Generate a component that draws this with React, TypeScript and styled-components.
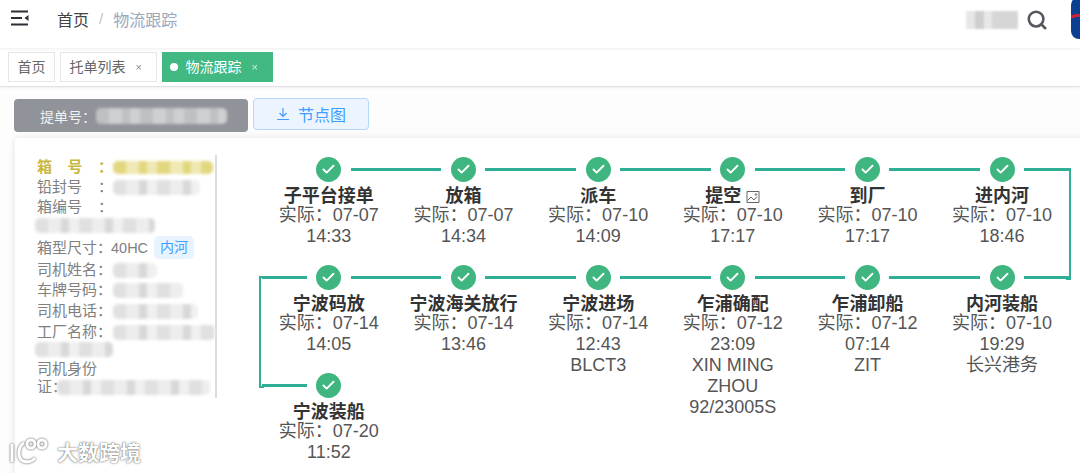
import React from "react";
import styled, { createGlobalStyle } from "styled-components";
import { Check, Search } from "lucide-react";

const GlobalStyle = createGlobalStyle`
  html, body {
    margin: 0;
    height: 473px;
    overflow: hidden;
    background: #fff;
    font-family: "Liberation Sans", "Noto Sans CJK SC", sans-serif;
  }
`;

const Page = styled.div`
  position: relative;
  width: 1080px;
  height: 473px;
  overflow: hidden;
  background: #fdfdfe;
`;

const Header = styled.header`
  height: 48px;
  display: flex;
  align-items: center;
  background: #fff;
  padding-left: 10px;
  box-shadow: 0 1px 3px rgba(0, 21, 41, 0.07);
  position: relative;
`;

const Crumbs = styled.div`
  display: flex;
  align-items: center;
  margin-left: 27px;
  margin-top: -11px;
  font-size: 16px;
  color: #444;
`;

const Sep = styled.span`
  margin: 0 10px;
  color: #c0c4cc;
  font-size: 15px;
`;

const CrumbCurrent = styled.span`
  color: #97a8be;
`;

const HeaderRight = styled.div`
  margin-left: auto;
  display: flex;
  align-items: center;
  margin-top: -8px;
  color: #54585f;
`;

const SearchBlur = styled.div`
  width: 52px;
  height: 18px;
  margin-right: 8px;
  filter: blur(1px);
  background: linear-gradient(90deg, #e6e6e6 0 18%, #cfcfcf 18% 34%, #e8e8e8 34% 50%, #d6d6d6 50% 100%);
`;

const Logo = styled.div`
  width: 20px;
  height: 42px;
  margin: -4px -11px 0 23px;
  border-radius: 8px 0 0 8px;
  background: linear-gradient(172deg, #0b3f92 0 40%, #c8213a 40% 47%, #0b3f92 47% 100%);
`;

const TagBar = styled.nav`
  height: 39px;
  padding: 4px 8px 0;
  box-sizing: border-box;
  display: flex;
  gap: 5px;
  background: #fff;
  border-bottom: 1px solid #dfe1e6;
  box-shadow: 0 1px 2px rgba(0, 0, 0, 0.06);
`;

const Tag = styled.div<{ $active?: boolean }>`
  height: 30px;
  box-sizing: border-box;
  display: flex;
  align-items: center;
  padding: ${(p) => (p.$active ? "0 8px 0 7px" : "0 8.5px")};
  border: 1px solid ${(p) => (p.$active ? "#42b983" : "#e4e6ea")};
  background: ${(p) => (p.$active ? "#42b983" : "#fff")};
  color: ${(p) => (p.$active ? "#fff" : "#666")};
  font-size: 14px;
  line-height: 26px;
`;

const TagDot = styled.i`
  width: 8px;
  height: 8px;
  border-radius: 50%;
  background: #fff;
  margin-right: 7px;
`;

const TagClose = styled.span`
  margin-left: 10px;
  margin-right: 6px;
  font-size: 11px;
  opacity: 0.75;
`;

const Toolbar = styled.div`
  display: flex;
  align-items: flex-start;
  gap: 5px;
  padding: 11px 0 0 14px;
  height: 51px;
  box-sizing: border-box;
`;

const BillBar = styled.div`
  width: 234px;
  height: 33px;
  margin-top: 1px;
  box-sizing: border-box;
  padding-left: 26px;
  display: flex;
  align-items: center;
  border-radius: 4px;
  background: #909399;
  color: #f1f1f2;
  font-size: 14px;
`;

const NodeButton = styled.button`
  width: 116px;
  height: 32px;
  display: flex;
  align-items: center;
  justify-content: center;
  gap: 8px;
  padding: 0;
  border: 1px solid #b3d8ff;
  border-radius: 4px;
  background: #ecf5ff;
  color: #409eff;
  font: 16px "Liberation Sans", "Noto Sans CJK SC", sans-serif;
`;

const Card = styled.main`
  margin-left: 15px;
  width: 1075px;
  height: 340px;
  display: flex;
  background: #fff;
  border-radius: 4px 0 0 0;
  box-shadow: 0 0 8px rgba(0, 0, 0, 0.1);
`;

const InfoPanel = styled.aside`
  width: 180px;
  height: 243px;
  margin: 17px 0 0 22px;
  padding-top: 2px;
  flex: none;
  box-sizing: border-box;
  border-right: 2px solid #dcdcdc;
  color: #808080;
  font-size: 15px;
  line-height: 20px;
`;

const InfoRow = styled.div<{ $gold?: boolean; $gap?: number }>`
  display: flex;
  align-items: center;
  min-height: 20px;
  margin-top: ${(p) => p.$gap ?? 0}px;
  color: ${(p) => (p.$gold ? "#c9b63f" : "inherit")};
  font-weight: ${(p) => (p.$gold ? 700 : 400)};
  white-space: nowrap;
`;

const InfoLabel = styled.span<{ $w?: number }>`
  width: ${(p) => p.$w ?? 76}px;
  flex: none;
  display: flex;
  justify-content: space-between;
`;

const InfoValue = styled.span`
  font-size: 14.5px;
`;

const Blur = styled.div<{ $w: number; $h?: number; $tone?: string; $light?: string; $indent?: number }>`
  width: ${(p) => p.$w}px;
  height: ${(p) => p.$h ?? 15}px;
  margin-left: ${(p) => p.$indent ?? 0}px;
  flex: none;
  border-radius: 5px;
  filter: blur(1.5px);
  background: repeating-linear-gradient(
    90deg,
    ${(p) => p.$tone ?? "#e0e0e0"} 0 13px,
    ${(p) => p.$light ?? "#ededed"} 13px 26px,
    ${(p) => p.$tone ?? "#d8d8d8"} 26px 34px,
    ${(p) => p.$light ?? "#f0f0f0"} 34px 44px
  );
`;

const RiverTag = styled.span`
  margin-left: 6px;
  padding: 0 6px;
  height: 23px;
  line-height: 23px;
  border-radius: 5px;
  background: #e8f3ff;
  color: #409eff;
  font-size: 14px;
`;

const Chart = styled.section`
  margin: 19px 0 0 44.5px;
  display: grid;
  grid-template-columns: repeat(6, 134.67px);
  grid-auto-rows: 108px;
`;

const Node = styled.div`
  position: relative;
  text-align: center;
  font-size: 18px;
  line-height: 21px;
  color: #555;
`;

const NodeHead = styled.div`
  display: flex;
  align-items: center;
  height: 25px;
  margin-bottom: 3px;
`;

const Link = styled.i<{ $off?: boolean }>`
  flex: 1;
  height: 2.5px;
  background: ${(p) => (p.$off ? "transparent" : "#2fb096")};
`;

const Dot = styled.span`
  width: 25px;
  height: 25px;
  margin: 0 9.5px;
  flex: none;
  display: flex;
  align-items: center;
  justify-content: center;
  border-radius: 50%;
  background: #3fb67f;
  color: #fff;
`;

const Turn = styled.i<{ $side: "left" | "right" }>`
  position: absolute;
  top: 11px;
  ${(p) => (p.$side === "left" ? "left: -3px;" : "right: -2px;")}
  width: 3px;
  height: 108px;
  box-sizing: content-box;
  border: 2.5px solid #2fb096;
  border-${(p) => (p.$side === "left" ? "right" : "left")}: none;
`;

const NodeTitle = styled.div`
  font-weight: 700;
  color: #333;
  display: flex;
  justify-content: center;
  align-items: center;
  gap: 5px;
  margin-bottom: -1px;
  position: relative;
  top: 1px;
`;

const Watermark = styled.div`
  position: absolute;
  left: 9px;
  bottom: 7px;
  display: flex;
  align-items: center;
  gap: 8px;
  color: #fff;
  font-size: 21px;
  font-weight: 700;
  text-shadow: 0 0 1px rgba(0, 0, 0, 0.7), 0 0 3px rgba(0, 0, 0, 0.35);
`;

const MenuIcon = () => (
  <svg width="20" height="18" viewBox="0 0 20 18" style={{ marginTop: -12 }}>
    <path d="M1 2.500h17M1 15.500h17M1 9h11" stroke="#2b2f36" strokeWidth="2" fill="none" />
    <path d="M18.500 6v6L14.500 9z" fill="#2b2f36" />
  </svg>
);

const DownloadIcon = () => (
  <svg width="14" height="14" viewBox="0 0 14 14" fill="none" stroke="#409eff" strokeWidth="1.2">
    <path d="M7 1v8M3.500 6 7 9.500 10.500 6M1 12.500h12" />
  </svg>
);

const PictureIcon = () => (
  <svg width="14" height="14" viewBox="0 0 14 14" fill="none" stroke="#666" strokeWidth="1">
    <path d="M1 1.500h12v11H1zM1.500 10.500 5 7l3 3 3-3.500" />
    <circle cx="10" cy="4.500" r="0.800" />
  </svg>
);

const WatermarkLogo = () => (
  <svg width="40" height="28" viewBox="0 0 40 28" fill="none" stroke="#fff" strokeWidth="3" style={{ filter: "drop-shadow(0 0 1px rgba(0,0,0,.7))" }}>
    <path d="M3 7v18M15 6C9 9 8 21 14 24c5 2 10 0 12-3" />
    <circle cx="22" cy="7" r="4" />
    <circle cx="33" cy="7" r="4" />
  </svg>
);

type Step = { title: string; time: [string, string]; extra?: string[]; picture?: boolean };

const steps: Step[] = [
  { title: "子平台接单", time: ["07-07", "14:33"] },
  { title: "放箱", time: ["07-07", "14:34"] },
  { title: "派车", time: ["07-10", "14:09"] },
  { title: "提空", time: ["07-10", "17:17"], picture: true },
  { title: "到厂", time: ["07-10", "17:17"] },
  { title: "进内河", time: ["07-10", "18:46"] },
  { title: "宁波码放", time: ["07-14", "14:05"] },
  { title: "宁波海关放行", time: ["07-14", "13:46"] },
  { title: "宁波进场", time: ["07-14", "12:43"], extra: ["BLCT3"] },
  { title: "乍浦确配", time: ["07-12", "23:09"], extra: ["XIN MING", "ZHOU", "92/23005S"] },
  { title: "乍浦卸船", time: ["07-12", "07:14"], extra: ["ZIT"] },
  { title: "内河装船", time: ["07-10", "19:29"], extra: ["长兴港务"] },
  { title: "宁波装船", time: ["07-20", "11:52"] },
];

export default function App() {
  return (
    <Page>
      <GlobalStyle />
      <Header>
        <MenuIcon />
        <Crumbs>
          <span>首页</span>
          <Sep>/</Sep>
          <CrumbCurrent>物流跟踪</CrumbCurrent>
        </Crumbs>
        <HeaderRight>
          <SearchBlur />
          <Search size={22} strokeWidth={2.8} />
          <Logo />
        </HeaderRight>
      </Header>
      <TagBar>
        <Tag>首页</Tag>
        <Tag>
          托单列表<TagClose>×</TagClose>
        </Tag>
        <Tag $active>
          <TagDot />
          物流跟踪<TagClose>×</TagClose>
        </Tag>
      </TagBar>
      <Toolbar>
        <BillBar>
          提单号：
          <Blur $w={131} $h={16} $tone="#bfc0c3" $light="#cfd0d2" />
        </BillBar>
        <NodeButton>
          <DownloadIcon />
          节点图
        </NodeButton>
      </Toolbar>
      <Card>
        <InfoPanel>
          <InfoRow $gold>
            <InfoLabel>
              <span>箱</span>
              <span>号</span>
              <span>：</span>
            </InfoLabel>
            <Blur $w={100} $h={13} $tone="#e2d77f" $light="#efe9b4" />
          </InfoRow>
          <InfoRow>
            <InfoLabel>
              <span>铅封号</span>
              <span>：</span>
            </InfoLabel>
            <Blur $w={87} />
          </InfoRow>
          <InfoRow>
            <InfoLabel>
              <span>箱编号</span>
              <span>：</span>
            </InfoLabel>
          </InfoRow>
          <InfoRow $gap={-2}>
            <Blur $w={120} $indent={-2} />
          </InfoRow>
          <InfoRow $gap={1}>
            <InfoLabel $w={74}>箱型尺寸：</InfoLabel>
            <InfoValue>40HC</InfoValue>
            <RiverTag>内河</RiverTag>
          </InfoRow>
          <InfoRow $gap={1}>
            <InfoLabel>司机姓名：</InfoLabel>
            <Blur $w={44} />
          </InfoRow>
          <InfoRow>
            <InfoLabel>车牌号码：</InfoLabel>
            <Blur $w={70} />
          </InfoRow>
          <InfoRow $gap={1}>
            <InfoLabel>司机电话：</InfoLabel>
            <Blur $w={85} />
          </InfoRow>
          <InfoRow $gap={1}>
            <InfoLabel>工厂名称：</InfoLabel>
            <Blur $w={102} />
          </InfoRow>
          <InfoRow $gap={-3}>
            <Blur $w={78} $indent={-2} />
          </InfoRow>
          <InfoRow>司机身份</InfoRow>
          <InfoRow $gap={-2}>
            证：
            <Blur $w={153} $indent={-10} />
          </InfoRow>
        </InfoPanel>
        <Chart>
          {steps.map((step, i) => (
            <Node key={step.title}>
              <NodeHead>
                <Link $off={i === 0} />
                <Dot>
                  <Check size={15} strokeWidth={3} />
                </Dot>
                <Link $off={i > 11} />
              </NodeHead>
              {i === 5 && <Turn $side="right" />}
              {i === 6 && <Turn $side="left" />}
              <NodeTitle>
                {step.title}
                {step.picture && <PictureIcon />}
              </NodeTitle>
              <div>实际：{step.time[0]}</div>
              <div>{step.time[1]}</div>
              {step.extra?.map((line) => <div key={line}>{line}</div>)}
            </Node>
          ))}
        </Chart>
      </Card>
      <Watermark>
        <WatermarkLogo />
        大数跨境
      </Watermark>
    </Page>
  );
}
